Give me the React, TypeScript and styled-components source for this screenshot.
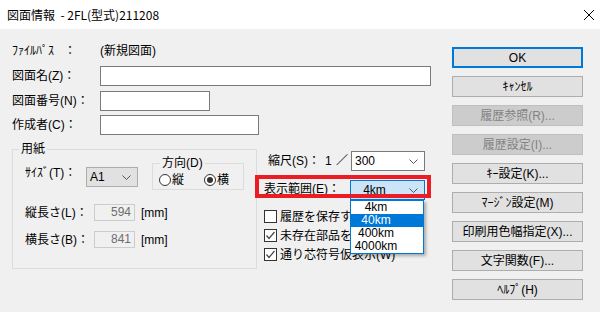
import styled, { createGlobalStyle, css } from 'styled-components';

const GlobalStyle = createGlobalStyle`
  html, body {
    margin: 0;
    padding: 0;
    background: #f0f0f0;
  }
  body {
    font-family: "Liberation Sans", "Noto Sans CJK JP", sans-serif;
    font-size: 12px;
    color: #000;
  }
`;

type ComboVariant = 'plain' | 'button' | 'focused';

const Chevron = () => (
  <svg width="9" height="5" viewBox="0 0 9 5">
    <polyline points="0.5,0.5 4.5,4.5 8.5,0.5" fill="none" stroke="#555" strokeWidth="1" />
  </svg>
);

const CheckMark = () => (
  <svg width="11" height="11" viewBox="0 0 11 11">
    <polyline points="1.5,5.5 4,8.5 9.5,2" fill="none" stroke="#444" strokeWidth="1.2" />
  </svg>
);

function CheckOption({ label, checked }: { label: string; checked?: boolean }) {
  return (
    <CheckRow>
      <CheckBox>{checked && <CheckMark />}</CheckBox>
      <span>{label}</span>
    </CheckRow>
  );
}

function RadioOption({ label, checked, gap }: { label: string; checked?: boolean; gap?: number }) {
  return (
    <RadioItem $gap={gap}>
      <RadioCircle $checked={checked} />
      <span>{label}</span>
    </RadioItem>
  );
}

const buttons = [
  { label: 'OK', primary: true },
  { label: 'ｷｬﾝｾﾙ' },
  { label: '履歴参照(R)...', disabled: true },
  { label: '履歴設定(I)...', disabled: true },
  { label: 'ｷｰ設定(K)...' },
  { label: 'ﾏｰｼﾞﾝ設定(M)' },
  { label: '印刷用色幅指定(X)...' },
  { label: '文字関数(F)...' },
  { label: 'ﾍﾙﾌﾟ(H)' },
];

const rangeOptions = ['4km', '40km', '400km', '4000km'];

export default function App() {
  return (
    <Window>
      <GlobalStyle />
      <TitleBar>
        <TitleText>図面情報&nbsp; - 2FL(型式)211208</TitleText>
        <CloseGlyph width="10" height="10" viewBox="0 0 10 10">
          <line x1="0" y1="0" x2="10" y2="10" stroke="#000" strokeWidth="1" />
          <line x1="10" y1="0" x2="0" y2="10" stroke="#000" strokeWidth="1" />
        </CloseGlyph>
      </TitleBar>

      <Body>
        <LeftPane>
          <FieldRow>
            <FieldLabel>ﾌｧｲﾙﾊﾟｽ&nbsp;&nbsp;&nbsp;：</FieldLabel>
            <span>(新規図面)</span>
          </FieldRow>
          <FieldRow $top={5}>
            <FieldLabel>図面名(Z)：</FieldLabel>
            <TextBox $width={331} />
          </FieldRow>
          <FieldRow $top={5}>
            <FieldLabel>図面番号(N)：</FieldLabel>
            <TextBox $width={110} />
          </FieldRow>
          <FieldRow $top={4}>
            <FieldLabel>作成者(C)：</FieldLabel>
            <TextBox $width={159} />
          </FieldRow>

          <Lower>
            <PaperGroup>
              <GroupLegend>用紙</GroupLegend>
              <SizeRow>
                <SizeLabel>ｻｲｽﾞ(T)：</SizeLabel>
                <ComboBox $variant="button" $width={52}>
                  <span>A1</span>
                  <Chevron />
                </ComboBox>
                <DirectionGroup>
                  <GroupLegend>方向(D)</GroupLegend>
                  <RadioRow>
                    <RadioOption label="縦" />
                    <RadioOption label="横" checked gap={20} />
                  </RadioRow>
                </DirectionGroup>
              </SizeRow>
              <LengthRow $top={14}>
                <LengthLabel>縦長さ(L)：</LengthLabel>
                <NumberBox>594</NumberBox>
                <Unit>[mm]</Unit>
              </LengthRow>
              <LengthRow $top={10}>
                <LengthLabel>横長さ(B)：</LengthLabel>
                <NumberBox>841</NumberBox>
                <Unit>[mm]</Unit>
              </LengthRow>
            </PaperGroup>

            <MiddleColumn>
              <ScaleRow>
                <ScaleLabel>縮尺(S)：</ScaleLabel>
                <ScalePart $width={11}>1</ScalePart>
                <ScalePart $width={15}>／</ScalePart>
                <ComboBox $variant="plain" $width={74}>
                  <span>300</span>
                  <Chevron />
                </ComboBox>
              </ScaleRow>
              <RangeRow>
                <RangeLabel>表示範囲(E)：</RangeLabel>
                <RangeCombo>
                  <ComboBox $variant="focused" $width={75}>
                    <CenteredValue>4km</CenteredValue>
                    <Chevron />
                  </ComboBox>
                  <DropList>
                    {rangeOptions.map((o) => (
                      <DropItem key={o} $selected={o === '40km'}>
                        {o}
                      </DropItem>
                    ))}
                  </DropList>
                </RangeCombo>
                <Highlight />
              </RangeRow>
              <CheckList>
                <CheckOption label="履歴を保存する(Y)" />
                <CheckOption label="未存在部品を表示(U)" checked />
                <CheckOption label="通り芯符号仮表示(W)" checked />
              </CheckList>
            </MiddleColumn>
          </Lower>
        </LeftPane>

        <ButtonColumn>
          {buttons.map((b) => (
            <DialogButton key={b.label} $primary={b.primary} $disabled={b.disabled}>
              {b.label}
            </DialogButton>
          ))}
        </ButtonColumn>
      </Body>
    </Window>
  );
}

const Window = styled.div`
  width: 600px;
  height: 312px;
  overflow: hidden;
  display: flex;
  flex-direction: column;
  background: #f0f0f0;
`;

const TitleBar = styled.div`
  height: 29px;
  flex: none;
  background: #fff;
  display: flex;
  align-items: center;
  padding-left: 7px;
`;

const TitleText = styled.span`
  font-family: "Noto Sans CJK JP", sans-serif;
  font-size: 12px;
  line-height: 16px;
`;

const CloseGlyph = styled.svg`
  margin-left: auto;
  margin-right: 6px;
`;

const Body = styled.div`
  display: flex;
  align-items: flex-start;
  padding: 12px 0 0 12px;
`;

const LeftPane = styled.div`
  width: 419px;
  display: flex;
  flex-direction: column;
`;

const FieldRow = styled.div<{ $top?: number }>`
  display: flex;
  align-items: center;
  height: 20px;
  margin-top: ${({ $top }) => $top ?? 0}px;
  line-height: 14px;
`;

const FieldLabel = styled.span`
  width: 88px;
  flex: none;
`;

const TextBox = styled.div<{ $width: number }>`
  width: ${({ $width }) => $width}px;
  height: 20px;
  box-sizing: border-box;
  border: 1px solid #7a7a7a;
  background: #fff;
`;

const Lower = styled.div`
  display: flex;
  align-items: flex-start;
  margin-top: 7px;
`;

const PaperGroup = styled.fieldset`
  margin: 0;
  padding: 0 0 20px 6px;
  width: 245px;
  min-inline-size: 0;
  box-sizing: border-box;
  border: 1px solid #dcdcdc;
`;

const GroupLegend = styled.legend`
  padding: 0 2px;
  line-height: 14px;
  font-size: 12px;
`;

const SizeRow = styled.div`
  display: flex;
  align-items: flex-start;
  padding-left: 6px;
  line-height: 14px;
`;

const SizeLabel = styled.span`
  width: 61px;
  flex: none;
  margin-top: 10px;
`;

const comboVariants = {
  plain: css`
    background: #fff;
    border: 1px solid #7a7a7a;
  `,
  button: css`
    background: #e1e1e1;
    border: 1px solid #adadad;
    margin-top: 11px;
  `,
  focused: css`
    background: #cce4f7;
    border: 1px solid #0078d7;
  `,
};

const ComboBox = styled.div<{ $variant: ComboVariant; $width: number }>`
  width: ${({ $width }) => $width}px;
  height: 20px;
  flex: none;
  box-sizing: border-box;
  display: flex;
  align-items: center;
  justify-content: space-between;
  padding: 0 6px 0 3px;
  line-height: 14px;
  ${({ $variant }) => comboVariants[$variant]}
`;

const CenteredValue = styled.span`
  flex: 1;
  text-align: center;
  padding-right: 14px;
`;

const DirectionGroup = styled.fieldset`
  margin: 0 0 0 14px;
  padding: 0 0 0 7px;
  width: 92px;
  min-inline-size: 0;
  box-sizing: border-box;
  border: 1px solid #dcdcdc;
`;

const RadioRow = styled.div`
  display: flex;
  align-items: center;
  height: 19px;
  margin-left: -1px;
`;

const RadioItem = styled.span<{ $gap?: number }>`
  display: flex;
  align-items: center;
  gap: 1px;
  margin-left: ${({ $gap }) => $gap ?? 0}px;
  font-size: 12px;
`;

const RadioCircle = styled.span<{ $checked?: boolean }>`
  width: 12px;
  height: 12px;
  box-sizing: border-box;
  border-radius: 50%;
  border: 1px solid #333;
  background: #fff;
  display: flex;
  align-items: center;
  justify-content: center;
  &::after {
    content: '';
    width: 6px;
    height: 6px;
    border-radius: 50%;
    background: ${({ $checked }) => ($checked ? '#333' : 'transparent')};
  }
`;

const LengthRow = styled.div<{ $top: number }>`
  display: flex;
  align-items: center;
  height: 17px;
  margin-top: ${({ $top }) => $top}px;
  padding-left: 6px;
  line-height: 14px;
`;

const LengthLabel = styled.span`
  width: 69px;
  flex: none;
`;

const NumberBox = styled.div`
  width: 41px;
  height: 17px;
  box-sizing: border-box;
  border: 1px solid #cccccc;
  background: #f0f0f0;
  color: #6d6d6d;
  text-align: right;
  padding-right: 3px;
  line-height: 15px;
`;

const Unit = styled.span`
  margin-left: 6px;
`;

const MiddleColumn = styled.div`
  width: 161px;
  margin: 9px 0 0 7px;
  display: flex;
  flex-direction: column;
  line-height: 14px;
`;

const ScaleRow = styled.div`
  display: flex;
  align-items: center;
  height: 20px;
  padding-left: 4px;
`;

const ScaleLabel = styled.span`
  width: 57px;
  flex: none;
`;

const ScalePart = styled.span<{ $width: number }>`
  width: ${({ $width }) => $width}px;
  flex: none;
`;

const RangeRow = styled.div`
  position: relative;
  display: flex;
  align-items: center;
  height: 20px;
  margin-top: 9px;
`;

const RangeLabel = styled.span`
  width: 86px;
  flex: none;
  margin-top: -3px;
`;

const RangeCombo = styled.div`
  position: relative;
`;

const Highlight = styled.div`
  position: absolute;
  top: -5px;
  left: -9px;
  right: -6px;
  height: 23px;
  box-sizing: border-box;
  border: 4px solid #ec1c24;
  pointer-events: none;
`;

const DropList = styled.div`
  position: absolute;
  top: 100%;
  left: 0;
  z-index: 2;
  width: 74px;
  box-sizing: border-box;
  border: 1px solid #0078d7;
  background: #fff;
  box-shadow: 2px 2px 3px rgba(0, 0, 0, 0.3);
`;

const DropItem = styled.div<{ $selected?: boolean }>`
  height: 13px;
  line-height: 13px;
  text-align: center;
  padding-right: 22px;
  background: ${({ $selected }) => ($selected ? '#0078d7' : 'transparent')};
  color: ${({ $selected }) => ($selected ? '#fff' : '#000')};
`;

const CheckList = styled.div`
  display: flex;
  flex-direction: column;
  margin-top: 7px;
`;

const CheckRow = styled.div`
  display: flex;
  align-items: center;
  gap: 3px;
  height: 19px;
  white-space: nowrap;
`;

const CheckBox = styled.span`
  width: 13px;
  height: 13px;
  flex: none;
  box-sizing: border-box;
  border: 1px solid #333;
  background: #fff;
  display: flex;
  align-items: center;
  justify-content: center;
`;

const ButtonColumn = styled.div`
  width: 131px;
  margin: 6px 0 0 21px;
  display: flex;
  flex-direction: column;
  gap: 8px;
`;

const DialogButton = styled.div<{ $primary?: boolean; $disabled?: boolean }>`
  height: 21px;
  box-sizing: border-box;
  display: flex;
  align-items: center;
  justify-content: center;
  line-height: 14px;
  background: ${({ $disabled }) => ($disabled ? '#cccccc' : '#e1e1e1')};
  border: ${({ $primary }) => ($primary ? '2px solid #0078d7' : '1px solid #adadad')};
  ${({ $disabled }) =>
    $disabled &&
    css`
      border-color: #bfbfbf;
      color: #838383;
    `}
`;
